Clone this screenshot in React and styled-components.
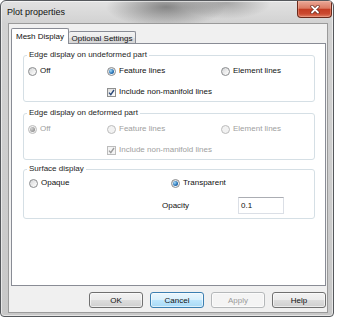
import React from "react";
import styled, { createGlobalStyle } from "styled-components";

const GlobalStyle = createGlobalStyle`
  html, body { margin: 0; padding: 0; background: #ffffff; }
  body { font-family: "Liberation Sans", Arial, sans-serif; }
  #root { width: 337px; height: 320px; }
`;

const Window = styled.div`
  box-sizing: border-box;
  width: 334px;
  height: 317px;
  border: 1px solid #55585c;
  border-radius: 6px 6px 4px 4px;
  background:
    radial-gradient(ellipse 60px 20px at 165px 6px, rgba(60, 60, 60, 0.55), rgba(60, 60, 60, 0) 100%),
    radial-gradient(ellipse 45px 16px at 225px 2px, rgba(80, 80, 80, 0.4), rgba(80, 80, 80, 0) 100%),
    linear-gradient(to bottom, #e2e2e2 0, #d2d2d2 22px, #c8c8c8 100%);
  box-shadow: inset 0 0 0 1px rgba(255, 255, 255, 0.55);
  display: flex;
  flex-direction: column;
  overflow: hidden;
`;

const TitleBar = styled.div`
  height: 22px;
  flex: none;
  display: flex;
  align-items: flex-start;
  padding: 0 1px 0 6px;
`;

const TitleText = styled.span`
  margin-top: 5px;
  font-size: 9px;
  line-height: 12px;
  color: #111;
`;

const CloseButton = styled.div`
  margin-left: auto;
  box-sizing: border-box;
  width: 35px;
  height: 17px;
  border: 1px solid #6b2a1c;
  border-top: none;
  border-radius: 0 0 4px 4px;
  background: linear-gradient(
    to bottom,
    #eaa897 0%,
    #dc7b63 45%,
    #c43d23 52%,
    #cb4a30 80%,
    #e08066 100%
  );
  box-shadow: inset 0 0 0 1px rgba(255, 200, 180, 0.35);
  display: flex;
  align-items: center;
  justify-content: center;
`;

const Frame = styled.div`
  flex: 1;
  display: flex;
  padding: 0 5px 3px 7px;
`;

const Client = styled.div`
  flex: 1;
  box-sizing: border-box;
  border: 1px solid #9a9a9a;
  background: #f0f0f0;
  padding: 4px 1px 0 2px;
  display: flex;
  flex-direction: column;
`;

const TabRow = styled.div`
  display: flex;
  align-items: flex-end;
  height: 15px;
`;

const Tab = styled.div`
  box-sizing: border-box;
  position: relative;
  border: 1px solid #898c95;
  border-bottom: none;
  border-radius: 2px 2px 0 0;
  font-size: 8px;
  color: #111;
  display: flex;
  align-items: center;
  justify-content: center;
  width: ${(p) => p.$w}px;
  height: ${(p) => (p.$active ? 16 : 12)}px;
  margin-bottom: ${(p) => (p.$active ? -1 : 0)}px;
  z-index: ${(p) => (p.$active ? 1 : 0)};
  padding-top: ${(p) => (p.$active ? 0 : 1)}px;
  background: ${(p) =>
    p.$active
      ? "#ffffff"
      : "linear-gradient(to bottom, #f3f3f3 0%, #ebebeb 50%, #dedede 51%, #d6d6d6 100%)"};
  border-left: ${(p) => (p.$joined ? "none" : "1px solid #898c95")};
`;

const Panel = styled.div`
  box-sizing: border-box;
  width: 315px;
  height: 243px;
  border: 1px solid #898c95;
  background: #ffffff;
  padding: 11px 10px 0 11px;
  display: flex;
  flex-direction: column;
`;

const Group = styled.div`
  position: relative;
  box-sizing: border-box;
  border: 1px solid #d5dfe5;
  border-radius: 3px;
  margin-top: ${(p) => p.$gap}px;
  padding: ${(p) => p.$pad};
  display: grid;
  grid-template-columns: ${(p) => p.$cols};
  grid-template-rows: ${(p) => p.$rows};
  row-gap: ${(p) => p.$rowGap}px;
  align-items: center;
`;

const Legend = styled.span`
  position: absolute;
  top: -6px;
  left: 3px;
  padding: 0 2px;
  background: #ffffff;
  font-size: 8px;
  line-height: 10px;
  color: #1e1e1e;
  white-space: nowrap;
`;

const Option = styled.label`
  display: flex;
  align-items: center;
  gap: 3px;
  font-size: 8px;
  line-height: 12px;
  white-space: nowrap;
  color: ${(p) => (p.$disabled ? "#a0a0a0" : "#111")};
  grid-column: ${(p) => p.$col || "auto"};
`;

const RadioMark = styled.span`
  box-sizing: border-box;
  flex: none;
  width: 9px;
  height: 9px;
  border-radius: 50%;
  border: 1px solid ${(p) => (p.$disabled ? "#bcbcbc" : "#8a8c8e")};
  background: ${(p) =>
    p.$disabled
      ? "#f2f2f2"
      : "linear-gradient(135deg, #d2d4d6 0%, #f0f0f0 60%, #ffffff 100%)"};
  display: flex;
  align-items: center;
  justify-content: center;
  &::after {
    content: "";
    display: ${(p) => (p.$checked ? "block" : "none")};
    width: 5px;
    height: 5px;
    border-radius: 50%;
    background: ${(p) =>
      p.$disabled
        ? "radial-gradient(circle at 35% 35%, #d4d4d4, #8c8c8c 80%)"
        : "radial-gradient(circle at 35% 35%, #a6dcfb, #2a75b8 55%, #174a80 100%)"};
  }
`;

const CheckMark = styled.span`
  box-sizing: border-box;
  flex: none;
  width: 9px;
  height: 9px;
  border: 1px solid ${(p) => (p.$disabled ? "#bcbcbc" : "#8e8f8f")};
  background: ${(p) =>
    p.$disabled ? "#f4f4f4" : "linear-gradient(135deg, #dcdcdc, #ffffff)"};
  display: flex;
  align-items: center;
  justify-content: center;
`;

const TextField = styled.div`
  box-sizing: border-box;
  width: 46px;
  height: 17px;
  border: 1px solid #dbdfe6;
  border-top-color: #abadb3;
  background: #ffffff;
  font-size: 8px;
  line-height: 15px;
  padding-left: 2px;
  color: #111;
  grid-column: 4;
`;

const ButtonRow = styled.div`
  display: flex;
  justify-content: flex-end;
  gap: 7px;
  margin-top: 6px;
  padding-right: 0;
`;

const Button = styled.div`
  box-sizing: border-box;
  width: 54px;
  height: 16px;
  border-radius: 3px;
  border: 1px solid
    ${(p) => (p.$default ? "#3c7fb1" : p.$disabled ? "#b5b8ba" : "#707070")};
  background: ${(p) =>
    p.$default
      ? "linear-gradient(to bottom, #eaf6fd 0%, #d9f0fc 50%, #bee6fd 51%, #a7d9f5 100%)"
      : p.$disabled
      ? "#f4f4f4"
      : "linear-gradient(to bottom, #f2f2f2 0%, #ebebeb 50%, #dddddd 51%, #cfcfcf 100%)"};
  box-shadow: inset 0 0 0 1px rgba(255, 255, 255, 0.6);
  font-size: 8px;
  color: ${(p) => (p.$disabled ? "#9a9a9a" : "#111")};
  display: flex;
  align-items: center;
  justify-content: center;
`;

function Radio({ label, checked, disabled, col }) {
  return (
    <Option $disabled={disabled} $col={col}>
      <RadioMark $checked={checked} $disabled={disabled} />
      {label}
    </Option>
  );
}

function Check({ label, disabled, col }) {
  const c = disabled ? "#9c9c9c" : "#2c4a7a";
  return (
    <Option $disabled={disabled} $col={col}>
      <CheckMark $disabled={disabled}>
        <svg width="7" height="7" viewBox="0 0 7 7">
          <path d="M1 3.6 L2.8 5.6 L6 1" fill="none" stroke={c} strokeWidth="1.4" />
        </svg>
      </CheckMark>
      {label}
    </Option>
  );
}

function EdgeGroup({ title, gap, disabled, offChecked }) {
  return (
    <Group
      $gap={gap}
      $pad="9px 0 3px 4px"
      $cols="79px 114px 1fr"
      $rows="12px 12px"
      $rowGap={9}
    >
      <Legend>{title}</Legend>
      <Radio label="Off" checked={offChecked} disabled={disabled} />
      <Radio label="Feature lines" checked={!offChecked} disabled={disabled} />
      <Radio label="Element lines" disabled={disabled} />
      <Check label="Include non-manifold lines" disabled={disabled} col="2 / span 2" />
    </Group>
  );
}

export default function App() {
  return (
    <>
      <GlobalStyle />
      <Window>
        <TitleBar>
          <TitleText>Plot properties</TitleText>
          <CloseButton>
            <svg width="10" height="9" viewBox="0 0 10 9">
              <path d="M2 1.5 L8 7.5 M8 1.5 L2 7.5" stroke="#6a2a1e" strokeWidth="3.2" strokeLinecap="round" />
              <path d="M2 1.5 L8 7.5 M8 1.5 L2 7.5" stroke="#ffffff" strokeWidth="1.8" strokeLinecap="round" />
            </svg>
          </CloseButton>
        </TitleBar>
        <Frame>
          <Client>
            <TabRow>
              <Tab $active $w={58}>Mesh Display</Tab>
              <Tab $w={67} $joined>Optional Settings</Tab>
            </TabRow>
            <Panel>
              <EdgeGroup title="Edge display on undeformed part" gap={0} />
              <EdgeGroup title="Edge display on deformed part" gap={11} disabled offChecked />
              <Group
                $gap={9}
                $pad="7px 0 4px 5px"
                $cols="133px 9px 67px 1fr"
                $rows="12px 17px"
                $rowGap={8}
              >
                <Legend>Surface display</Legend>
                <Radio label="Opaque" col="1" />
                <Radio label="Transparent" checked col="3 / span 2" />
                <Option $col="2 / span 2">Opacity</Option>
                <TextField>0.1</TextField>
              </Group>
            </Panel>
            <ButtonRow>
              <Button>OK</Button>
              <Button $default>Cancel</Button>
              <Button $disabled>Apply</Button>
              <Button>Help</Button>
            </ButtonRow>
          </Client>
        </Frame>
      </Window>
    </>
  );
}
